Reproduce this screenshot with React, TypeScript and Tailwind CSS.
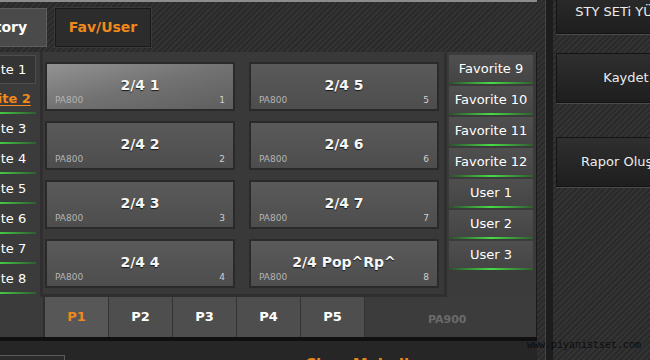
import React from 'react'

const carbon =
  'bg-[image:repeating-linear-gradient(135deg,#2a2a2a_0px,#2a2a2a_2px,#333333_2px,#333333_4px)]'

const pads = [
  { title: '2/4 1', num: 1, active: true },
  { title: '2/4 2', num: 2 },
  { title: '2/4 3', num: 3 },
  { title: '2/4 4', num: 4 },
  { title: '2/4 5', num: 5 },
  { title: '2/4 6', num: 6 },
  { title: '2/4 7', num: 7 },
  { title: '2/4 Pop^Rp^', num: 8 },
]

const leftList = ['Favorite 1', 'Favorite 2', 'Favorite 3', 'Favorite 4', 'Favorite 5', 'Favorite 6', 'Favorite 7', 'Favorite 8']
const rightList = ['Favorite 9', 'Favorite 10', 'Favorite 11', 'Favorite 12', 'User 1', 'User 2', 'User 3']
const pages = ['P1', 'P2', 'P3', 'P4', 'P5']

function GreenLine() {
  return <div className="h-[2px] bg-linear-to-r from-[#2b4f2b] via-[#46dc46] to-[#2f5f2f]" />
}

function Pad({ title, num, active }: { title: string; num: number; active?: boolean }) {
  return (
    <div
      className={`h-[49px] border-2 border-[#2a2a2a] flex flex-col ${
        active
          ? 'bg-linear-to-br from-[#939393] via-[#727272] to-[#5e5e5e]'
          : 'bg-linear-to-b from-[#5a5a5a] to-[#4d4d4d]'
      }`}
    >
      <div className="pt-[13px] h-[30px] text-center text-[14px] leading-[17px] font-bold text-[#f6f6f6] [text-shadow:0_1px_1px_#1a1a1a]">
        {title}
      </div>
      <div className="mt-[1px] px-[8px] flex justify-between text-[9px] leading-[11px]">
        <span className="text-[#b4b4b4]">PA800</span>
        <span className="text-[#cfcfcf]">{num}</span>
      </div>
    </div>
  )
}

function SideBtn({ text, className }: { text: string; className?: string }) {
  return (
    <div
      className={`w-[140px] h-[50px] shrink-0 flex items-center justify-center bg-linear-to-b from-[#2f2f2f] to-[#1e1e1e] border border-[#141414] shadow-[0_1px_0_#4a4a4a] text-[13px] text-[#ececec] whitespace-nowrap ${className ?? ''}`}
    >
      {text}
    </div>
  )
}

export default function App() {
  return (
    <div className={`relative w-[650px] h-[360px] overflow-hidden flex font-['DejaVu_Sans',sans-serif] ${carbon}`}>
      {/* main area */}
      <div className="w-[537px] shrink-0 flex flex-col">
        <div className="h-[2px] bg-[#8c8c8c]" />

        {/* top tabs */}
        <div className="h-[50px] pt-[6px] flex gap-[8px] overflow-hidden">
          <div className="ml-[-50px] w-[97px] h-[39px] shrink-0 flex items-center justify-center bg-[#4a4a4a] border border-[#5e5e5e] text-[14px] font-bold text-white">
            History
          </div>
          <div className="w-[96px] h-[39px] shrink-0 flex items-center justify-center bg-[#2c2c2c] border border-[#1a1a1a] shadow-[0_0_0_1px_#3a3a3a] text-[14px] font-bold text-[#f0891c]">
            Fav/User
          </div>
        </div>

        {/* panel */}
        <div className="h-[245px] flex bg-[#3b3b3b] border-r border-[#1b1b1b] overflow-hidden">
          <div className="ml-[-48px] w-[84px] shrink-0 pt-[3px] flex flex-col gap-[1px]">
            {leftList.map((name, i) => (
              <div
                key={name}
                className={`h-[29px] flex flex-col ${i === 0 ? 'bg-[#343434] border border-[#4d4d4d]' : ''}`}
              >
                <div
                  className={`flex-1 flex items-center justify-center text-[13px] ${
                    i === 1 ? 'font-bold text-[#f0891c] underline underline-offset-2' : 'text-white'
                  }`}
                >
                  {name}
                </div>
                {i > 0 && <GreenLine />}
              </div>
            ))}
          </div>

          <div className="ml-[4px] w-[407px] shrink-0 bg-[#393939] border-x-[3px] border-b-[3px] border-[#2f2f2f] pl-[2px] pr-[5px] pt-[10px] grid grid-rows-[repeat(4,49px)] grid-flow-col grid-cols-2 gap-x-[14px] gap-y-[10px] content-start">
            {pads.map((p) => (
              <Pad key={p.num} title={p.title} num={p.num} active={p.active} />
            ))}
          </div>

          <div className="ml-[2px] w-[84px] shrink-0 pt-[3px] flex flex-col gap-[2px]">
            {rightList.map((name) => (
              <div key={name} className="h-[29px] flex flex-col bg-linear-to-b from-[#4f4f4f] to-[#444444]">
                <div className="flex-1 flex items-center justify-center text-[13px] text-white">{name}</div>
                <GreenLine />
              </div>
            ))}
          </div>
        </div>

        {/* page tabs */}
        <div className="h-[40px] flex bg-[#3b3b3b] border-r border-[#1b1b1b]">
          <div className="w-[45px] shrink-0 border-r-2 border-[#2e2e2e]" />
          {pages.map((p, i) => (
            <div
              key={p}
              className={`w-[64px] shrink-0 flex items-center justify-center border-r border-[#333333] text-[13px] font-bold ${
                i === 0 ? 'bg-[#575757] text-[#f0891c]' : 'bg-[#4e4e4e] text-white'
              }`}
            >
              {p}
            </div>
          ))}
          <div className="flex-1 flex items-center pl-[63px] pt-[6px] bg-[#3c3c3c] text-[11px] font-bold text-[#6a6a6a]">
            PA900
          </div>
        </div>

        {/* bottom strip */}
        <div className="flex-1 flex items-start bg-[#262626] border-t-4 border-[#101010] overflow-hidden">
          <div className="w-[65px] h-[10px] mt-[14px] border-t border-r border-[#5a5a5a] bg-[#2c2c2c]" />
          <div className="ml-[240px] mt-[17px] text-[15px] leading-[15px] font-bold text-[#e8851a] whitespace-nowrap">
            Chan Melodi
          </div>
        </div>
      </div>

      {/* separator */}
      <div className="w-[8px] shrink-0" />
      <div className="w-[8px] shrink-0 bg-[#1d1d1d] border-l border-[#444444]" />

      {/* right column */}
      <div className="flex-1 flex flex-col pl-[3px]">
        <SideBtn text="STY SETi YÜKLE" className="mt-[-16px] pt-[6px]" />
        <SideBtn text="Kaydet" className="mt-[19px]" />
        <SideBtn text="Rapor Oluştur" className="mt-[34px]" />
      </div>

      <div className="absolute left-[527px] top-[340px] font-['Liberation_Mono',monospace] text-[10px] leading-[12px] text-[#0c0c0c]">
        www.piyanistset.com
      </div>
    </div>
  )
}
